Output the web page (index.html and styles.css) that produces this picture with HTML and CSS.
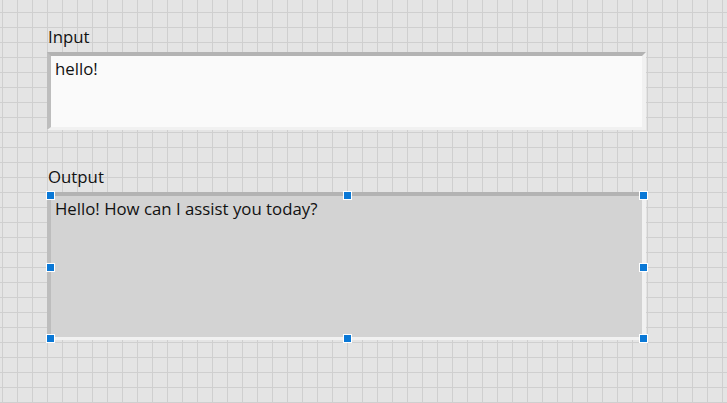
FILE: index.html
```html
<!DOCTYPE html>
<html>
<head>
<meta charset="utf-8">
<link rel="stylesheet" href="styles.css">
</head>
<body>
<div class="panel">
  <div class="label">Input</div>
  <div class="frame frame-input">
    <div class="text">hello!</div>
  </div>
  <div class="label label-output">Output</div>
  <div class="frame frame-output">
    <div class="text">Hello! How can I assist you today?</div>
    <span class="handle h-tl"></span>
    <span class="handle h-tm"></span>
    <span class="handle h-tr"></span>
    <span class="handle h-ml"></span>
    <span class="handle h-mr"></span>
    <span class="handle h-bl"></span>
    <span class="handle h-bm"></span>
    <span class="handle h-br"></span>
  </div>
</div>
</body>
</html>
```
FILE: styles.css
```css
html, body {
  margin: 0;
  padding: 0;
  width: 727px;
  height: 403px;
  overflow: hidden;
}
body {
  background-color: #e4e4e4;
  background-image:
    linear-gradient(to right, #cfcfcf 1px, transparent 1px),
    linear-gradient(to bottom, #cfcfcf 1px, transparent 1px);
  background-size: 15px 15px;
  background-position: 2px 12px;
  font-family: "Open Sans", "Noto Sans", sans-serif;
  color: #111111;
}
.panel {
  padding: 26px 0 0 47px;
  width: 599px;
}
.label {
  height: 21px;
  line-height: 21px;
  font-size: 16.8px;
  margin-bottom: 5px;
  padding-left: 1px;
}
.label-output {
  margin-top: 36px;
}
.frame {
  position: relative;
  box-sizing: border-box;
  width: 599px;
  border-style: solid;
  border-width: 4px 4px 3px 4px;
  border-color: #b3b3b3 #f1f1f1 #f1f1f1 #bdbdbd;
}
.frame-input {
  height: 78px;
  background: #fafafa;
}
.frame-output {
  height: 148px;
  background: #d3d3d3;
}
.text {
  font-size: 16.8px;
  line-height: 20px;
  padding: 3px 4px;
}
.handle {
  position: absolute;
  box-sizing: border-box;
  width: 9px;
  height: 9px;
  background: #0a78d6;
  border: 1px solid #ffffff;
}
.h-tl, .h-tm, .h-tr { top: -5px; }
.h-ml, .h-mr { top: 67px; }
.h-bl, .h-bm, .h-br { top: 138px; }
.h-tl, .h-ml, .h-bl { left: -5px; }
.h-tm, .h-bm { left: 292px; }
.h-tr, .h-mr, .h-br { left: 588px; }
```
